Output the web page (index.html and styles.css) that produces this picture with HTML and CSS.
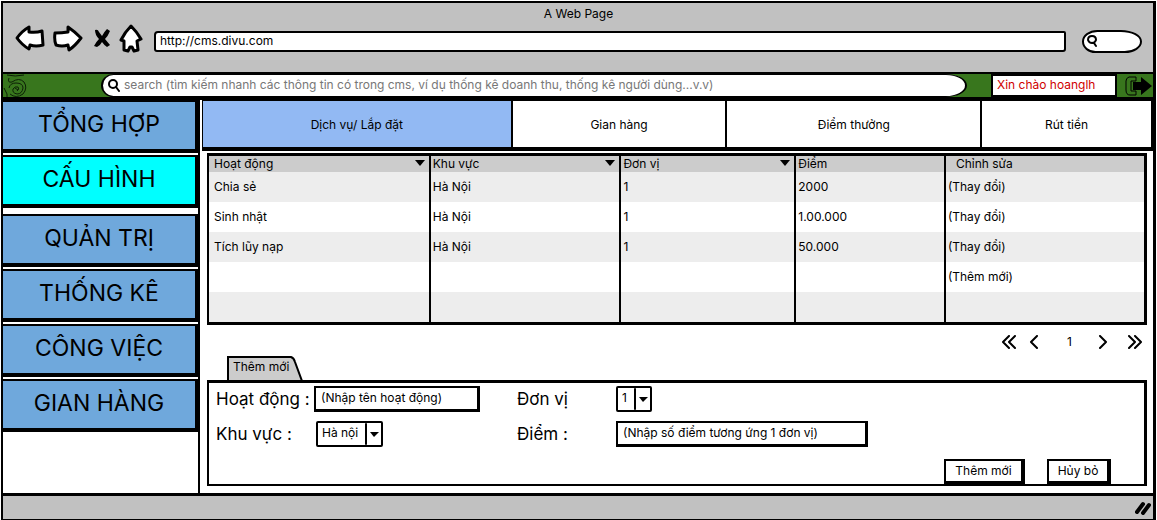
FILE: index.html
```html
<!DOCTYPE html>
<html lang="vi">
<head>
<meta charset="utf-8">
<meta name="viewport" content="width=device-width, initial-scale=1">
<title>A Web Page</title>
<link rel="stylesheet" href="styles.css">
</head>
<body>
<div class="window">
  <header class="chrome">
    <div class="chrome-title">A Web Page</div>
    <div class="chrome-nav">
      <button class="icon-button" type="button" aria-label="Back"><svg width="30" height="30" viewBox="0 0 30 30"><path class="outline bold" d="M2 14Q7 7 14 3L14 8Q21 9 27 7L28 21Q21 23 15 21L14 25Q7 21 2 14Z"/></svg></button>
      <button class="icon-button" type="button" aria-label="Forward"><svg width="30" height="30" viewBox="0 0 30 30"><path class="outline bold" d="M2 9Q9 9 15 8L15 3Q21 7 28 14 22 22 16 26L15 21Q9 23 3 21Q1 16 2 9Z"/></svg></button>
      <button class="icon-button stop" type="button" aria-label="Stop"><svg width="18" height="20" viewBox="0 0 18 20"><path d="M2 1Q5 0 6 3L9 7Q11 3 14 0L17 2Q15 7 12 10L17 16 14 18Q11 16 9 13 7 17 4 18L1 17Q3 13 6 10 2 6 2 1Z"/></svg></button>
      <button class="icon-button" type="button" aria-label="Home"><svg width="24" height="30" viewBox="0 0 24 30"><path class="outline bold" d="M12 2Q18 8 22 15L18 17 19 26 15 27 13 23 11 23 9 27 5 26 5 17 2 16Q6 8 12 2Z"/></svg></button>
      <input class="address" type="text" aria-label="Address" value="http://cms.divu.com">
      <label class="mini-search"><svg width="12" height="14" viewBox="0 0 12 14"><path class="outline" d="M2 6Q2 2 6 2T10 6Q9 9 6 9T2 6ZM8 9 10 12"/></svg><input type="search" aria-label="Web search"></label>
    </div>
  </header>

  <div class="toolbar">
    <svg class="logo" width="26" height="25" viewBox="0 0 26 25"><path d="M4 1Q12 3 21 1M6 4Q4 9 9 8 16 3 21 8 25 14 20 20 13 25 7 20M1 14 4 20 4 23M6 14Q7 9 13 9 20 9 20 14 19 20 14 20 9 19 10 15 12 12 15 13 17 15 14 17M12 14 15 16"/></svg>
    <label class="search"><svg width="14" height="14" viewBox="0 0 14 14"><circle class="line" cx="6" cy="6" r="4"/><path class="line" d="M9 9 12 13"/></svg><input type="search" aria-label="Search" placeholder="search (tìm kiếm nhanh các thông tin có trong cms, ví dụ thống kê doanh thu, thống kê người dùng...v.v)"></label>
    <div class="greeting">Xin chào hoanglh</div>
    <button class="icon-button logout" type="button" aria-label="Log out"><svg width="28" height="22" viewBox="0 0 28 22"><path class="thin" d="M11 2H4Q1 3 1 6V15Q1 20 5 20H11V16H6V6H11Z"/><path d="M8 7H16V2L27 11 16 20V15H8Z"/></svg></button>
  </div>

  <div class="content">
    <nav class="side">
      <button type="button">TỔNG HỢP</button>
      <button type="button" class="current">CẤU HÌNH</button>
      <button type="button" class="group">QUẢN TRỊ</button>
      <button type="button">THỐNG KÊ</button>
      <button type="button">CÔNG VIỆC</button>
      <button type="button">GIAN HÀNG</button>
    </nav>
    <main>
      <div class="tabs">
        <button type="button" class="selected">Dịch vụ/ Lắp đặt</button>
        <button type="button">Gian hàng</button>
        <button type="button">Điểm thưởng</button>
        <button type="button">Rút tiền</button>
      </div>
      <div class="panel">
        <table>
          <colgroup><col class="c-action"><col class="c-area"><col class="c-unit"><col class="c-points"><col class="c-edit"></colgroup>
          <thead><tr><th class="sortable">Hoạt động</th><th class="sortable">Khu vực</th><th class="sortable">Đơn vị</th><th>Điểm</th><th class="edit">Chỉnh sửa</th></tr></thead>
          <tbody>
            <tr><td>Chia sẻ</td><td>Hà Nội</td><td>1</td><td>2000</td><td><a href="#">(Thay đổi)</a></td></tr>
            <tr><td>Sinh nhật</td><td>Hà Nội</td><td>1</td><td>1.00.000</td><td><a href="#">(Thay đổi)</a></td></tr>
            <tr><td>Tích lũy nạp</td><td>Hà Nội</td><td>1</td><td>50.000</td><td><a href="#">(Thay đổi)</a></td></tr>
            <tr><td></td><td></td><td></td><td></td><td><a href="#">(Thêm mới)</a></td></tr>
            <tr><td></td><td></td><td></td><td></td><td></td></tr>
          </tbody>
        </table>
        <div class="pager">
          <button class="icon-button" type="button" aria-label="First page"><svg width="14" height="14" viewBox="0 0 14 14"><path class="line" d="M7 1 1 7 7 13M13 1 7 7 13 13"/></svg></button>
          <button class="icon-button" type="button" aria-label="Previous page"><svg width="14" height="14" viewBox="0 0 14 14"><path class="line" d="M9 1 3 7 9 13"/></svg></button>
          <span>1</span>
          <button class="icon-button" type="button" aria-label="Next page"><svg width="14" height="14" viewBox="0 0 14 14"><path class="line" d="M3 1 9 7 3 13"/></svg></button>
          <button class="icon-button" type="button" aria-label="Last page"><svg width="14" height="14" viewBox="0 0 14 14"><path class="line" d="M1 1 7 7 1 13M7 1 13 7 7 13"/></svg></button>
        </div>
        <div class="form-tab"><svg viewBox="0 0 76 24" width="76" height="24"><path d="M1 25V1H64Q67 2 68 6L75 25"/></svg><span>Thêm mới</span></div>
        <form class="editor">
          <div class="fields">
            <label for="action">Hoạt động :</label>
            <input id="action" class="field short" type="text" value="(Nhập tên hoạt động)">
            <label for="unit">Đơn vị</label>
            <div class="select tiny"><select id="unit"><option>1</option></select><svg width="18" height="20" viewBox="0 0 18 20"><path class="line" d="M1 0V20"/><path d="M5 8H14L9 13Z"/></svg></div>
            <label for="area">Khu vực :</label>
            <div class="select area"><select id="area"><option>Hà nội</option></select><svg width="18" height="20" viewBox="0 0 18 20"><path class="line" d="M1 0V20"/><path d="M5 8H14L9 13Z"/></svg></div>
            <label for="points">Điểm :</label>
            <input id="points" class="field long" type="text" value="(Nhập số điểm tương ứng 1 đơn vị)">
          </div>
          <div class="actions">
            <button type="button">Thêm mới</button>
            <button type="button" class="cancel">Hủy bỏ</button>
          </div>
        </form>
      </div>
    </main>
  </div>
  <footer class="status"><svg width="16" height="14" viewBox="0 0 16 14"><path d="M2 11 8 3M8 12 14 4"/></svg></footer>
</div>
</body>
</html>
```
FILE: styles.css
```css
* { box-sizing: border-box; }

body {
  margin: 0;
  background: #fff;
  color: #000;
  font: 12px/16px Inter, "Noto Sans", sans-serif;
}

button, input, select { font: inherit; color: inherit; margin: 0; }
button { cursor: pointer; }
svg { display: block; flex: none; }

.line, .outline { fill: none; stroke: #000; stroke-width: 2; stroke-linejoin: round; stroke-linecap: round; }
.outline { fill: #fff; }
.bold { stroke-width: 3; }
.thin { fill: none; stroke: #000; stroke-width: 1; }
.icon-button { padding: 0; border: 0; background: none; }

.window {
  display: flex;
  flex-direction: column;
  min-height: calc(100vh - 2px);
  margin: 1px;
  border: 2px solid #000;
  border-right-width: 3px;
}

.chrome { background: #c1c1c1; border-bottom: 2px solid #000; padding: 3px 11px 16px 12px; }
.chrome-title { text-align: center; line-height: 16px; }
.chrome-nav { display: flex; align-items: center; gap: 8px; height: 34px; }
.stop { margin-left: 2px; }
.address {
  flex: 1;
  min-width: 0;
  height: 21px;
  margin: 4px 8px 0 3px;
  padding: 0 4px 2px;
  border: 2px solid #000;
  border-radius: 4px 2px 3px 3px;
  background: #fff;
}
.mini-search {
  display: flex;
  align-items: center;
  width: 60px;
  height: 23px;
  margin-top: 4px;
  padding-left: 2px;
  border: 2px solid #000;
  border-radius: 16px 22px 18px 14px / 12px;
  background: #fff;
}
.mini-search input { width: 36px; border: 0; background: none; outline: 0; }

.toolbar { display: flex; height: 26px; background: #38761d; border-bottom: 3px solid #000; }
.logo { fill: none; stroke: #0c1f06; stroke-width: 1; }
.search {
  display: flex;
  flex: 1;
  align-items: center;
  gap: 3px;
  min-width: 0;
  margin-left: 72px;
  padding: 0 0 2px 4px;
  border: 2px solid #000;
  border-width: 1px 2px;
  border-radius: 13px 22px 22px 13px / 12px;
  background: #fff;
}
.search input { flex: 1; min-width: 0; padding: 0; border: 0; background: none; outline: 0; }
.search input::placeholder { color: #777; opacity: 1; }
.greeting { width: 126px; margin: 0 8px 0 24px; padding: 1px 4px; border: 2px solid #000; background: #fff; color: #d00000; }
.logout { width: 28px; }

.content { display: flex; flex: 1; }
.side { display: flex; flex-direction: column; gap: 2px; width: 197px; border-right: 2px solid #000; }
.side button {
  height: 53px;
  padding: 0 0 3px;
  border: solid #000;
  border-width: 2px 3px 4px 0;
  background: #6fa8dc;
  font-size: 23px;
  line-height: 28px;
}
.side .current { background: #0ff; }
.side .group { margin-top: 4px; }

main { flex: 1; min-width: 0; }
.tabs { display: grid; grid-template-columns: 311fr 215fr 255fr 171fr; margin-left: 2px; }
.tabs button { height: 51px; padding: 2px 0 0; border: solid #000; border-width: 1px 2px 4px 0; background: #fff; }
.tabs .selected { border-left-width: 1px; background: #92b9f3; }

.panel { padding: 2px 6px 7px 7px; }
table { width: 100%; table-layout: fixed; border-collapse: separate; border-spacing: 0; border: 2px solid #000; border-width: 3px 3px 3px 2px; }
.c-action { width: 23.5%; }
.c-area { width: 20.4%; }
.c-unit { width: 18.7%; }
.c-points { width: 16%; }
.c-edit { width: 21.4%; }
th { position: relative; height: 16px; padding: 0 3px; background: #ccc; font-weight: 400; line-height: 16px; text-align: left; }
td { height: 30px; padding: 0 3px; }
th:first-child, td:first-child { padding-left: 5px; }
th + th, td + td { border-left: 2px solid #000; padding-left: 2px; }
th.edit { padding-left: 10px; }
.sortable::after {
  content: "";
  position: absolute;
  top: 4px;
  right: 4px;
  border: 5px solid transparent;
  border-top: 6px solid #000;
  border-bottom: 0;
}
tbody tr:nth-child(odd) { background: #ededed; }
td a { color: inherit; text-decoration: none; }

.pager { display: flex; justify-content: flex-end; align-items: center; gap: 12px; height: 28px; margin-top: 3px; padding-right: 5px; }
.pager span { width: 31px; text-align: center; }
.pager .icon-button { width: 14px; }
.pager span + button { margin-right: 5px; }

.form-tab { display: grid; width: 76px; height: 24px; margin-left: 20px; }
.form-tab > * { grid-area: 1 / 1; }
.form-tab path { fill: #ccc; stroke: #000; stroke-width: 2; }
.form-tab span { padding: 3px 6px; white-space: nowrap; }

.editor { border: 2px solid #000; border-top-width: 3px; border-right-width: 3px; }
.fields {
  display: grid;
  grid-template-columns: 98px 203px 99px 1fr;
  grid-auto-rows: 26px;
  gap: 9px 0;
  align-items: center;
  padding: 3px 7px 0;
}
.fields label { font-size: 17px; line-height: 24px; white-space: nowrap; }
.field { height: 26px; padding: 0 5px 2px; border: 2px solid #000; border-width: 2px 3px 3px 2px; background: #fff; }
.short { width: 166px; }
.long { width: 252px; }
.select { display: grid; height: 26px; }
.select > * { grid-area: 1 / 1; }
.select select { width: 100%; height: 26px; padding: 0 4px 2px; border: 2px solid #000; border-radius: 2px; background: #fff; appearance: none; }
.select svg { place-self: center end; height: 22px; pointer-events: none; }
.tiny { width: 36px; }
.area { width: 67px; margin-left: 2px; }

.actions { display: flex; justify-content: flex-end; gap: 22px; margin-top: 12px; padding-right: 33px; }
.actions button { width: 81px; height: 25px; padding: 0; border: solid #000; border-width: 2px 4px 3px 2px; background: #fff; }
.actions .cancel { width: 64px; }

.status { display: flex; justify-content: flex-end; align-items: center; height: 26px; padding-right: 2px; background: #c1c1c1; border-top: 3px solid #000; }
.status path { fill: none; stroke: #000; stroke-width: 4; stroke-linecap: round; }
```
